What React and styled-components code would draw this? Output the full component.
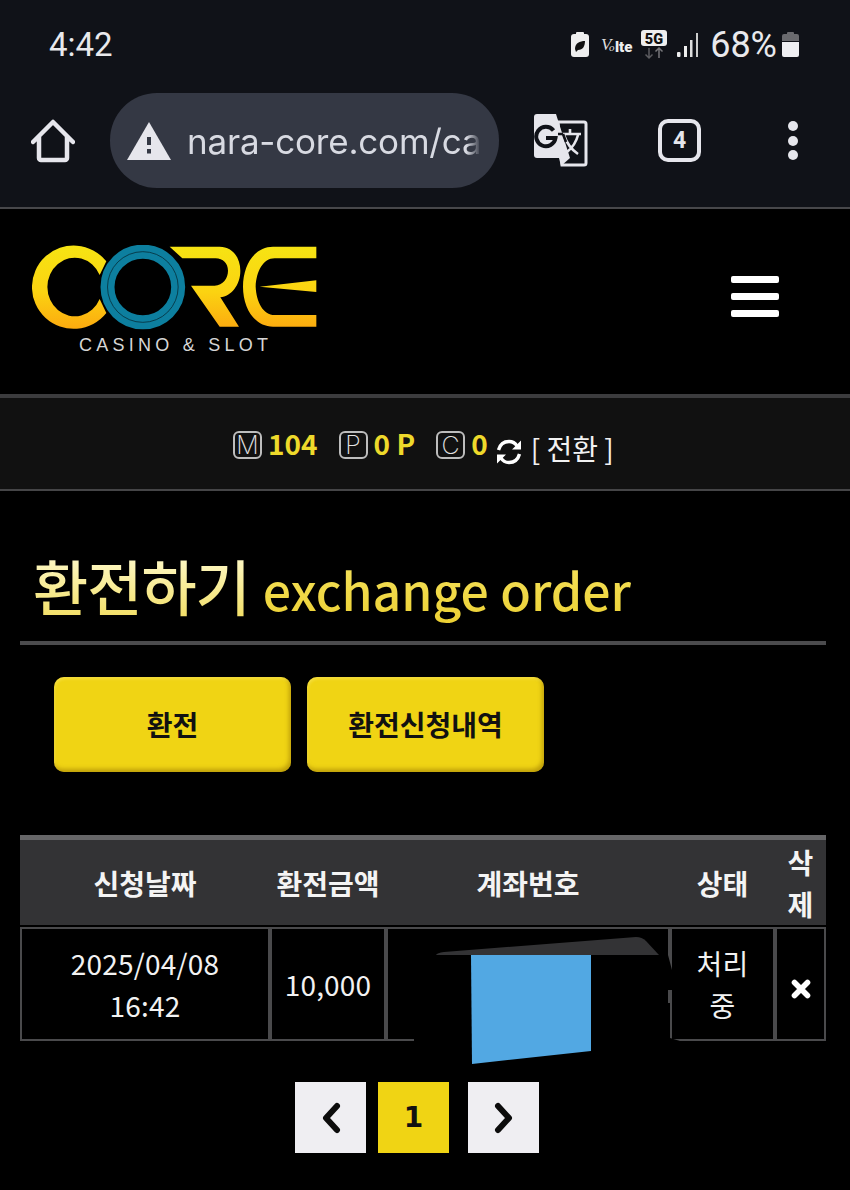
import React from "react";
import styled, { createGlobalStyle } from "styled-components";

const KR = `"Noto Sans CJK KR", "Noto Sans", sans-serif`;
const YELLOW = "#f0d414";

const Global = createGlobalStyle`
  html, body { margin: 0; padding: 0; background: #000; }
  body { width: 850px; height: 1190px; overflow: hidden; font-family: ${KR}; }
`;

const Page = styled.div`
  width: 850px;
  height: 1190px;
  background: #000;
  color: #fff;
`;

/* ---------- phone + browser chrome ---------- */
const Chrome = styled.div`
  height: 207px;
  background: #101218;
  border-bottom: 2px solid #47474a;
`;
const StatusBar = styled.div`
  height: 93px;
  box-sizing: border-box;
  padding: 0 51px 4px 49px;
  display: flex;
  align-items: center;
  justify-content: space-between;
  font-family: Roboto, sans-serif;
  color: #e9e9ec;
`;
const Clock = styled.span`
  font-size: 33px;
`;
const StatusIcons = styled.div`
  display: flex;
  align-items: center;
`;
const Percent = styled.span`
  font-size: 36px;
  margin: 0 5px 0 11px;
`;
const BrowserBar = styled.div`
  height: 95px;
  display: flex;
  align-items: center;
  padding-left: 31px;
`;
const UrlPill = styled.div`
  width: 389px;
  height: 95px;
  box-sizing: border-box;
  margin-left: 35px;
  padding: 0 18px 0 17px;
  border-radius: 47px;
  background: #343844;
  display: flex;
  align-items: center;
  gap: 16px;
`;
const UrlText = styled.div`
  flex: 1;
  overflow: hidden;
  white-space: nowrap;
  font-family: Inter, Roboto, sans-serif;
  font-size: 35px;
  color: #d8dae2;
  letter-spacing: -0.2px;
  -webkit-mask-image: linear-gradient(90deg, #000 95%, transparent);
  mask-image: linear-gradient(90deg, #000 95%, transparent);
`;
const TranslateSlot = styled.div`
  margin-left: 35px;
  display: flex;
`;
const TabCount = styled.div`
  width: 43px;
  height: 43px;
  box-sizing: border-box;
  margin-left: 70px;
  border: 4px solid #e6e6ec;
  border-radius: 10px;
  display: flex;
  align-items: center;
  justify-content: center;
  font-family: Roboto, sans-serif;
  font-weight: 700;
  font-size: 23px;
  color: #e6e6ec;
`;
const Dots = styled.div`
  margin-left: 87px;
  display: flex;
  flex-direction: column;
  gap: 4.5px;
`;
const Dot = styled.span`
  width: 10px;
  height: 10px;
  border-radius: 50%;
  background: #e6e6ec;
`;

/* ---------- site header ---------- */
const Header = styled.header`
  height: 185px;
  box-sizing: border-box;
  padding: 36px 71px 0 32px;
  display: flex;
  justify-content: space-between;
  align-items: flex-start;
`;
const LogoBlock = styled.div`
  display: flex;
  flex-direction: column;
  width: 285px;
`;
const LogoTag = styled.div`
  margin-top: 4px;
  padding-left: 47px;
  font-family: "Liberation Sans", sans-serif;
  font-size: 18px;
  line-height: 22px;
  letter-spacing: 4.25px;
  color: #d6d6d6;
  white-space: nowrap;
`;
const Burger = styled.div`
  width: 48px;
  margin-top: 31px;
  display: flex;
  flex-direction: column;
  gap: 10px;
`;
const BurgerBar = styled.span`
  height: 7px;
  border-radius: 2px;
  background: #fff;
`;

/* ---------- balance strip ---------- */
const Balance = styled.div`
  height: 97px;
  box-sizing: border-box;
  background: #111;
  border-top: 4px solid #3c3c3e;
  border-bottom: 2px solid #454547;
  display: flex;
  align-items: center;
  padding: 2px 0 0 233px;
`;
const Badge = styled.span`
  width: 29px;
  height: 28px;
  box-sizing: border-box;
  border: 2px solid #bdbdbd;
  border-radius: 6px;
  display: flex;
  align-items: center;
  justify-content: center;
  font-family: Inter, sans-serif;
  font-weight: 200;
  font-size: 25px;
  color: #e2e2e2;
  margin-left: ${(p) => p.$gap || 0}px;
`;
const Amount = styled.span`
  margin-left: 6px;
  font-weight: 700;
  font-size: 28px;
  line-height: 1;
  color: #eed92b;
  position: relative;
  top: -2px;
  white-space: pre;
`;
const Swap = styled.span`
  font-size: 28px;
  line-height: 1;
  color: #f2f2f2;
  margin: 6px 0 0 9px;
  white-space: pre;
`;

/* ---------- title ---------- */
const Main = styled.main`
  padding: 0 24px 0 20px;
`;
const Title = styled.h1`
  margin: 0;
  height: 154px;
  box-sizing: border-box;
  padding: 58px 0 0 13px;
  border-bottom: 4px solid #4b4b4d;
  display: flex;
  align-items: baseline;
  gap: 13px;
  font-weight: 500;
  line-height: 72px;
  white-space: nowrap;
`;
const TitleKo = styled.span`
  font-size: 60px;
  letter-spacing: -1px;
  background: linear-gradient(180deg, #fffbd2, #f2de62);
  -webkit-background-clip: text;
  background-clip: text;
  color: transparent;
`;
const TitleEn = styled.span`
  font-size: 50px;
  background: linear-gradient(180deg, #f6e462, #ecd032);
  -webkit-background-clip: text;
  background-clip: text;
  color: transparent;
`;
const ButtonRow = styled.div`
  margin-top: 32px;
  padding-left: 34px;
  display: flex;
  gap: 16px;
`;
const ActionButton = styled.button`
  width: 237px;
  height: 95px;
  border: 0;
  border-radius: 10px;
  background: ${YELLOW};
  box-shadow: inset -2px -3px 4px rgba(150, 115, 0, 0.55), inset 1px 2px 3px rgba(255, 240, 120, 0.45);
  color: #111;
  font-family: ${KR};
  font-weight: 700;
  font-size: 28px;
  padding: 0 0 2px;
`;

/* ---------- table ---------- */
const TableWrap = styled.div`
  position: relative;
  margin-top: 63px;
`;
const Table = styled.table`
  width: 806px;
  table-layout: fixed;
  border-collapse: separate;
  border-spacing: 0;
`;
const HeadCell = styled.th`
  height: 85px;
  padding: 0;
  background: #333335;
  border-top: 5px solid #666668;
  font-weight: 700;
  font-size: 28px;
  line-height: 42px;
  color: #f4f4f4;
  text-align: center;
`;
const Spacer = styled.td`
  height: 2px;
  padding: 0;
`;
const BodyCell = styled.td`
  height: 110px;
  padding: 0;
  border: 2px solid #4a4a4c;
  font-size: 28px;
  line-height: 42px;
  letter-spacing: 0.2px;
  color: #f2f2f2;
  text-align: center;
`;
const Cover = styled.svg`
  position: absolute;
  left: 0;
  top: 0;
`;
const CrossIcon = styled.svg`
  display: block;
  margin: 10px auto 0;
`;

/* ---------- pagination ---------- */
const Pager = styled.nav`
  margin-top: 41px;
  padding-left: 275px;
  display: flex;
  gap: 12px;
`;
const PageButton = styled.div`
  width: 71px;
  height: 71px;
  margin-left: ${(p) => p.$offset || 0}px;
  background: ${(p) => (p.$active ? YELLOW : "#efeef2")};
  color: #111;
  display: flex;
  align-items: center;
  justify-content: center;
  font-family: "DejaVu Sans", sans-serif;
  font-weight: 700;
  font-size: 28px;
`;

const Logo = () => (
  <svg width="285" height="85" viewBox="97 75 855 255">
    <defs>
      <linearGradient id="logoGold" gradientUnits="userSpaceOnUse" x1="0" y1="75" x2="0" y2="330">
        <stop offset="0" stopColor="#f6e413" />
        <stop offset="0.55" stopColor="#fbd311" />
        <stop offset="1" stopColor="#fca90f" />
      </linearGradient>
    </defs>
    <path
      fill="url(#logoGold)"
      d="M320 124 A125 125 0 1 0 320 279 L300 237 A82 88 0 1 1 300 165 Z"
    />
    <path
      fill="url(#logoGold)"
      d="M510 80 H660 C700 80 722 115 722 152 C722 195 695 228 662 232 L718 320 H660 L574 197 H645 C670 195 685 175 685 152 C685 130 670 115 648 115 H548 Z"
    />
    <path
      fill="url(#logoGold)"
      d="M950 80 H820 C765 80 730 135 730 200 C730 265 765 320 820 320 H950 V285 H825 C790 285 770 245 768 200 C770 155 790 115 825 115 H950 Z"
    />
    <path fill="url(#logoGold)" d="M780 200 L950 181 V216 Z" />
    <circle cx="429.5" cy="201" r="106" fill="none" stroke="#0d7f9f" strokeWidth="42" />
    <circle cx="429.5" cy="201" r="106" fill="none" stroke="#06303c" strokeWidth="2.5" />
  </svg>
);

const HomeIcon = () => (
  <svg width="44" height="44" viewBox="0 0 44 44" fill="none" stroke="#e6e6ec" strokeWidth="4.5" strokeLinejoin="round" strokeLinecap="round">
    <path d="M2 23 L22 3 L42 23 M8 18 V39 a2 2 0 0 0 2 2 H34 a2 2 0 0 0 2 -2 V18" />
  </svg>
);

const WarnIcon = () => (
  <svg width="44" height="38" viewBox="0 0 44 38">
    <path fill="#e6e6ec" d="M22 0 L44 38 H0 Z" />
    <rect x="20" y="15" width="4" height="8" fill="#343844" />
    <rect x="20" y="27" width="4" height="4.5" fill="#343844" />
  </svg>
);

const TranslateIcon = () => (
  <svg width="54" height="53" viewBox="0 0 54 53">
    <path d="M24 8 H50 a2 2 0 0 1 2 2 V49 a2 2 0 0 1 -2 2 H28 Z" fill="#101218" stroke="#e6e6ec" strokeWidth="3" />
    <path d="M3 0 H22 L36 44 H3 a3 3 0 0 1 -3 -3 V3 a3 3 0 0 1 3 -3 Z" fill="#e6e6ec" />
    <path d="M25 44 H36 L27 52 Z" fill="#e6e6ec" />
    <path d="M19.5 16.5 A9.7 9.7 0 1 0 21.5 24 H12" fill="none" stroke="#101218" strokeWidth="4" />
    <path d="M27 20 H47 M36 15 V20 M30 21 C33 30 38 36 44 40 M44 21 C42 29 38 34 33 38" fill="none" stroke="#e6e6ec" strokeWidth="2.6" />
    <path d="M24 20 H29 M29 20 L32 28" fill="none" stroke="#101218" strokeWidth="2.6" />
  </svg>
);

const LeafBattery = () => (
  <svg width="18" height="25" viewBox="0 0 18 25">
    <rect x="5" y="0" width="8" height="3" rx="1" fill="#eee" />
    <rect x="0" y="2" width="18" height="23" rx="3" fill="#eee" />
    <path d="M4 17 C4 11 9 9 14 9 C14 14 12 18 7 18 L5 20 Z" fill="#111" />
  </svg>
);

const VoLte = () => (
  <svg width="36" height="22" viewBox="0 0 36 22" style={{ marginLeft: 12 }}>
    <text x="0" y="16" fontFamily="'Liberation Serif', serif" fontStyle="italic" fontSize="17" fill="#ddd">V</text>
    <text x="8" y="17" fontFamily="'Liberation Serif', serif" fontStyle="italic" fontSize="11" fill="#ddd">o</text>
    <text x="14" y="18" fontFamily="Roboto, sans-serif" fontWeight="900" fontSize="15" fill="#eee">lte</text>
  </svg>
);

const FiveG = () => (
  <svg width="26" height="30" viewBox="0 0 26 30" style={{ marginLeft: 4 }}>
    <rect x="0" y="0" width="26" height="16" rx="3" fill="#eee" />
    <text x="13" y="13.5" textAnchor="middle" fontFamily="Roboto, sans-serif" fontWeight="900" fontSize="14.5" fill="#111">5G</text>
    <path d="M8 18 V28 M4.5 24.5 L8 28 L11.5 24.5" fill="none" stroke="#5c5c60" strokeWidth="1.5" />
    <path d="M18 28 V18 M14.5 21.5 L18 18 L21.5 21.5" fill="none" stroke="#77777b" strokeWidth="1.5" />
  </svg>
);

const Signal = () => (
  <svg width="22" height="24" viewBox="0 0 22 24" style={{ marginLeft: 10 }}>
    <rect x="0" y="19" width="3.5" height="5" rx="1" fill="#eee" />
    <rect x="7" y="13" width="3" height="11" fill="#eee" />
    <rect x="13" y="7" width="2.5" height="17" fill="#ddd" />
    <rect x="19" y="0" width="2" height="24" fill="#ccc" />
  </svg>
);

const Battery = () => (
  <svg width="17" height="25" viewBox="0 0 17 25">
    <rect x="5" y="0" width="7" height="3" rx="1" fill="#6a6a6e" />
    <path d="M2 2 H15 a2 2 0 0 1 2 2 V9 H0 V4 a2 2 0 0 1 2 -2 Z" fill="#6a6a6e" />
    <path d="M0 10 H17 V23 a2 2 0 0 1 -2 2 H2 a2 2 0 0 1 -2 -2 Z" fill="#efeff2" />
  </svg>
);

const Refresh = () => (
  <svg width="26" height="26" viewBox="0 0 26 26" fill="none" stroke="#fff" strokeWidth="3.4" style={{ marginLeft: 8, marginTop: 14 }}>
    <path d="M2.5 11 C4 5.5 8 2.5 13 2.5 C17 2.5 19.5 4.5 21 7" />
    <path d="M23.5 15 C22 20.5 18 23.5 13 23.5 C9 23.5 6.5 21.5 5 19" />
    <path d="M25 1.5 V10.5 H16 Z M1 24.5 V15.5 H10 Z" fill="#fff" stroke="none" />
  </svg>
);

const Chevron = ({ dir }) => (
  <svg width="20" height="32" viewBox="0 0 20 32" fill="none" stroke="#0c0c0c" strokeWidth="6" strokeLinecap="round" strokeLinejoin="round">
    <path d={dir === "left" ? "M16 4 L5 16 L16 28" : "M4 4 L15 16 L4 28"} />
  </svg>
);

const Cross = () => (
  <CrossIcon width="20" height="20" viewBox="0 0 20 20" fill="none" stroke="#fff" strokeWidth="5.6" strokeLinecap="round">
    <path d="M3.5 3.5 L16.5 16.5 M16.5 3.5 L3.5 16.5" />
  </CrossIcon>
);

export default function App() {
  return (
    <Page>
      <Global />
      <Chrome>
        <StatusBar>
          <Clock>4:42</Clock>
          <StatusIcons>
            <LeafBattery />
            <VoLte />
            <FiveG />
            <Signal />
            <Percent>68%</Percent>
            <Battery />
          </StatusIcons>
        </StatusBar>
        <BrowserBar>
          <HomeIcon />
          <UrlPill>
            <WarnIcon />
            <UrlText>nara-core.com/ca</UrlText>
          </UrlPill>
          <TranslateSlot>
            <TranslateIcon />
          </TranslateSlot>
          <TabCount>4</TabCount>
          <Dots>
            <Dot />
            <Dot />
            <Dot />
          </Dots>
        </BrowserBar>
      </Chrome>

      <Header>
        <LogoBlock>
          <Logo />
          <LogoTag>CASINO &amp; SLOT</LogoTag>
        </LogoBlock>
        <Burger>
          <BurgerBar />
          <BurgerBar />
          <BurgerBar />
        </Burger>
      </Header>

      <Balance>
        <Badge>M</Badge>
        <Amount>104</Amount>
        <Badge $gap={21}>P</Badge>
        <Amount>0 P</Amount>
        <Badge $gap={21}>C</Badge>
        <Amount>0</Amount>
        <Refresh />
        <Swap>[ 전환 ]</Swap>
      </Balance>

      <Main>
        <Title>
          <TitleKo>환전하기</TitleKo>
          <TitleEn>exchange order</TitleEn>
        </Title>
        <ButtonRow>
          <ActionButton>환전</ActionButton>
          <ActionButton>환전신청내역</ActionButton>
        </ButtonRow>

        <TableWrap>
          <Table>
            <colgroup>
              <col width="250" />
              <col width="116" />
              <col width="284" />
              <col width="105" />
              <col width="51" />
            </colgroup>
            <thead>
              <tr>
                <HeadCell>신청날짜</HeadCell>
                <HeadCell>환전금액</HeadCell>
                <HeadCell>계좌번호</HeadCell>
                <HeadCell>상태</HeadCell>
                <HeadCell>삭제</HeadCell>
              </tr>
              <tr>
                <Spacer colSpan={5} />
              </tr>
            </thead>
            <tbody>
              <tr>
                <BodyCell>2025/04/08<br />16:42</BodyCell>
                <BodyCell>10,000</BodyCell>
                <BodyCell />
                <BodyCell>처리<br />중</BodyCell>
                <BodyCell><Cross /></BodyCell>
              </tr>
            </tbody>
          </Table>
          <Cover width="806" height="240" viewBox="20 835 806 240">
            <path fill="#000" d="M414 955 H668 L672 970 L673 990 H668 V1003 H670 V1038 L680 1041 L600 1066 H414 Z" />
            <path fill="#333335" d="M436 955 Q437 953 444 952 L636 937 Q642 937 646 941 L659 955 Z" />
            <path fill="#52a8e3" d="M471 955 H591 V1051 L472 1064 Z" />
          </Cover>
        </TableWrap>

        <Pager>
          <PageButton><Chevron dir="left" /></PageButton>
          <PageButton $active>1</PageButton>
          <PageButton $offset={7}><Chevron dir="right" /></PageButton>
        </Pager>
      </Main>
    </Page>
  );
}
